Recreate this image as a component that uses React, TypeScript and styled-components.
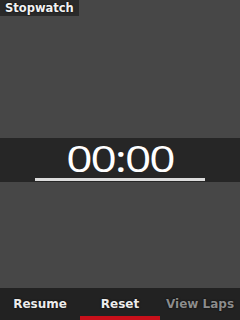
import styled, { createGlobalStyle } from 'styled-components';

const GlobalStyle = createGlobalStyle`
    html, body {
        margin: 0;
        padding: 0;
        background: #474747;
    }
    #root {
        width: 240px;
        height: 320px;
    }
`;

export default function App() {
    return (
        <>
            <GlobalStyle />
            <Screen>
                <TitleBar>
                    <Title>Stopwatch</Title>
                </TitleBar>
                <Middle>
                    <TimerBand>
                        <TimeText>00:00</TimeText>
                        <Underline />
                    </TimerBand>
                </Middle>
                <SoftKeys>
                    <SoftKey>Resume</SoftKey>
                    <SoftKey active>Reset</SoftKey>
                    <SoftKey dim>View Laps</SoftKey>
                </SoftKeys>
            </Screen>
        </>
    );
}

const Screen = styled.div`
    width: 240px;
    height: 320px;
    display: flex;
    flex-direction: column;
    background: #474747;
    font-family: "DejaVu Sans", sans-serif;
    overflow: hidden;
`;

const TitleBar = styled.div`
    align-self: flex-start;
    width: 79px;
    height: 16px;
    background: #2a2a2a;
    display: flex;
    align-items: center;
    padding-left: 5px;
    box-sizing: border-box;
`;

const Title = styled.span`
    color: #f2f2f2;
    font-size: 11.5px;
    font-weight: bold;
    white-space: nowrap;
    text-shadow: 0 0 2px #000;
`;

const Middle = styled.div`
    flex: 1;
    display: flex;
    flex-direction: column;
    justify-content: center;
    padding-top: 16px;
`;

const TimerBand = styled.div`
    height: 44px;
    background: #262626;
    display: flex;
    flex-direction: column;
    align-items: center;
    justify-content: flex-end;
`;

const TimeText = styled.div`
    color: #ffffff;
    font-family: "Open Sans", sans-serif;
    font-weight: 500;
    font-size: 36px;
    line-height: 36px;
    letter-spacing: -1.6px;
    transform: scaleX(1.28);
    margin-bottom: 1px;
`;

const Underline = styled.div`
    width: 170px;
    height: 3px;
    background: #dcdcdc;
    margin-bottom: 1px;
`;

const SoftKeys = styled.div`
    height: 32px;
    background: #222222;
    display: grid;
    grid-template-columns: 80px 80px 80px;
`;

const SoftKey = styled.div<{ active?: boolean; dim?: boolean }>`
    display: flex;
    align-items: center;
    justify-content: center;
    padding-top: 4px;
    font-size: 12px;
    font-weight: bold;
    white-space: nowrap;
    color: ${p => (p.dim ? '#8c8c8c' : '#ececec')};
    text-shadow: 0 0 2px #000;
    border-bottom: 4px solid ${p => (p.active ? '#c8101a' : 'transparent')};
`;
